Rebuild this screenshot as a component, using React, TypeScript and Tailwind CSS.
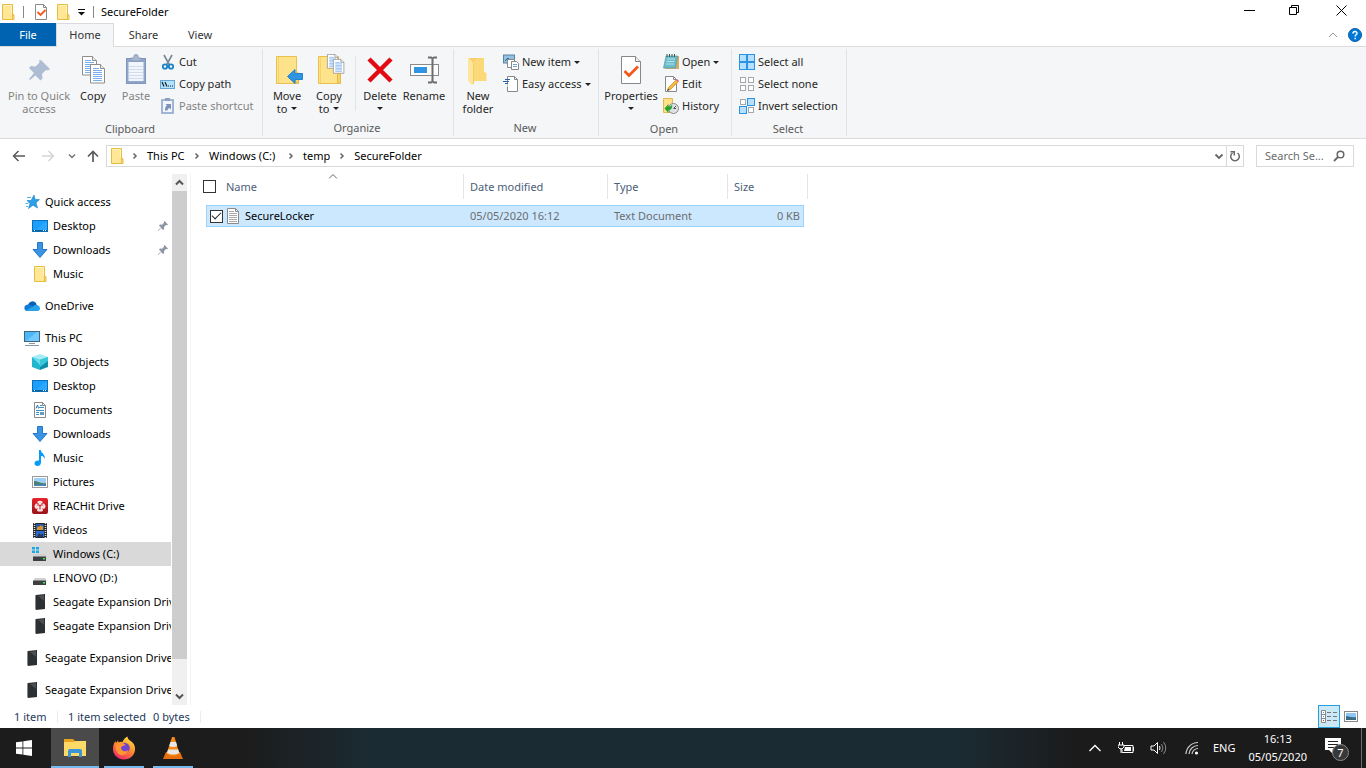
import React from 'react';

type P = { children?: React.ReactNode };
type IconProps = { w?: number; h?: number; children?: React.ReactNode; className?: string };

function Svg({ w = 16, h = 16, children, className = '' }: IconProps) {
  return (
    <svg width={w} height={h} viewBox={`0 0 ${w} ${h}`} fill="none" aria-hidden="true" className={`shrink-0 ${className}`}>
      {children}
    </svg>
  );
}

const Folder = () => (
  <Svg>
    <path d="M2.5.5h10v10.500h1.500v4.500h-11.500z" fill="#ffe796" stroke="#e6bd41" />
    <path d="M12.500 10.500v5M12.500 10.500h1.500" stroke="#e6bd41" />
    <path d="M3.500 1.500h8v8" stroke="#fff3c4" />
  </Svg>
);
const CheckDoc = () => (
  <Svg>
    <path d="M2.500.500h8l3 3v12h-11z" fill="#fff" stroke="#8a8a8a" />
    <path d="M10.500.500v3h3" stroke="#8a8a8a" />
    <path d="M4.500 8l3 3 5-5" stroke="#f4591c" strokeWidth="1.800" />
  </Svg>
);
const Caret = ({ className = '' }: { className?: string }) => (
  <Svg w={6} h={3} className={className}><path d="M0 0h6L3 3z" fill="#222" /></Svg>
);
const Chevron = () => (
  <Svg w={6} h={8}><path d="M1.500 1.500L4 4 1.500 6.500" stroke="#666" strokeWidth="1.500" /></Svg>
);

const PinBig = () => (
  <Svg w={32} h={32}>
    <path d="M17 6l9 9-2 1.500-2-.500-4 4 .500 4.500-2 2-5-5L6 26l-1-1 5-6-5-5 2-2 4.500.500 4-4-.500-2z" fill="#afbdd4" transform="translate(1 0)" />
  </Svg>
);
const Sheet = ({ x, y }: { x: number; y: number }) => (
  <g transform={`translate(${x} ${y})`}>
    <path d="M.500.500h10l4 4v14.500H.500z" fill="#fff" stroke="#8d8d8d" />
    <path d="M10.500.500v4h4" fill="#eee" stroke="#8d8d8d" />
    <path d="M3 4.500h6M3 6.500h9M3 8.500h9M3 10.500h9M3 12.500h9M3 14.500h9M3 16.500h9" stroke="#78aef0" />
  </g>
);
const CopyBig = () => (
  <Svg w={32} h={32}><Sheet x={5} y={2} /><Sheet x={13} y={10} /></Svg>
);
const PasteBig = () => (
  <Svg w={32} h={32}>
    <rect x="6.500" y="4.500" width="19" height="25" fill="#8fa5cb" stroke="#8296bb" />
    <rect x="8.500" y="8" width="15" height="19" fill="#f1f5fc" />
    <path d="M9 12.500h14M9 15.500h14M9 18.500h14M9 21.500h14M9 24.500h14" stroke="#d2dcec" />
    <path d="M11 7V4h3V2.500a2 2 0 014 0V4h3v3z" fill="#a8b7d0" stroke="#8d9cb7" />
  </Svg>
);
const Scissors = () => (
  <Svg>
    <path d="M4 1l5.500 10M12 1L6.500 11" stroke="#7a8794" strokeWidth="1.600" />
    <circle cx="5" cy="12.500" r="2.200" stroke="#1782c5" strokeWidth="1.800" />
    <circle cx="11" cy="12.500" r="2.200" stroke="#1782c5" strokeWidth="1.800" />
  </Svg>
);
const PathIcon = () => (
  <Svg>
    <rect x=".500" y="4.500" width="14" height="8" fill="#b5e2fb" stroke="#64a5d4" />
    <path d="M2 6l2 4.500M5 6l2 4.500" stroke="#123" strokeWidth="1.200" />
    <path d="M8 10h1M10 10h1M12 10h1" stroke="#123" strokeWidth="1.200" />
  </Svg>
);
const PasteShortcut = () => (
  <Svg>
    <rect x="2" y="2" width="11" height="13" fill="#f2f5fa" stroke="#8fa5cb" strokeWidth="1.600" />
    <rect x="5" y="0" width="5" height="3" fill="#8fa0bd" />
    <path d="M5 12.500c0-3 .500-4 2-5L5.500 6H11v5.500L9.500 10c-1.500.500-2 1.500-2 2.500z" fill="#7b92bc" />
  </Svg>
);
const BigFolder = () => (
  <>
    <path d="M5.500 2.500h20v21h2v6h-22z" fill="#ffe38b" stroke="#eac04c" />
    <path d="M7.500 3v26" stroke="#f5d470" />
    <path d="M24.500 29v-10q2-2 3 0v10z" fill="#fbd365" stroke="#e5b94a" />
  </>
);
const MoveTo = () => (
  <Svg w={32} h={32}>
    <BigFolder />
    <path d="M16.500 22.500l7.500-7v4h7.500v6h-7.500v4z" fill="#2f94e2" stroke="#2384d0" />
  </Svg>
);
const CopyTo = () => (
  <Svg w={32} h={32}>
    <BigFolder />
    <g transform="translate(14 0) scale(.750)"><Sheet x={0} y={0} /></g>
    <g transform="translate(20 5) scale(.750)"><Sheet x={0} y={0} /></g>
  </Svg>
);
const DeleteIcon = () => (
  <Svg w={32} h={32}><path d="M5 5l22 22M27 5L5 27" stroke="#e30b13" strokeWidth="4.500" /></Svg>
);
const RenameIcon = () => (
  <Svg w={32} h={32}>
    <rect x="2.500" y="10.500" width="28" height="11" fill="#fff" stroke="#8a8a8a" />
    <rect x="6" y="13" width="13" height="6" fill="#2f94e2" />
    <path d="M20 3.500h3l1.500 1 1.500-1h3M20 28.500h3l1.500-1 1.500 1h3M24.500 4v24" stroke="#6d6d6d" strokeWidth="2" />
  </Svg>
);
const NewFolder = () => (
  <Svg w={32} h={32}>
    <path d="M12 4h10v14l2.500 1v8H12z" fill="#fbd878" />
    <path d="M6 4h4l2 4v22l-2 1-4-4z" fill="#ffe59b" />
    <path d="M7 4h15l-8 1-2 3z" fill="#f5cf6c" />
    <path d="M11.500 30V9l-3-5" stroke="#f2cc69" />
  </Svg>
);
const NewItem = () => (
  <Svg>
    <rect x=".500" y="1" width="11" height="8" fill="#92c1e1" stroke="#5a84a2" />
    <path d="M2 7l3-3 3 3" stroke="#28638a" />
    <path d="M4.500 5.500h7v8h-7z" fill="#fff" stroke="#888" />
    <path d="M8.500 7.500h5l2 2v6h-7z" fill="#fff" stroke="#888" />
    <path d="M10 10.500h4M10 12.500h4" stroke="#6fa1d5" />
  </Svg>
);
const EasyAccess = () => (
  <Svg>
    <path d="M4.500.500h7l3 3v12h-10z" fill="#fff" stroke="#888" />
    <path d="M11.500.500v3h3" stroke="#888" />
    <path d="M2 3.500h5M0 5.500h6M2 7.500h3" stroke="#2363a6" />
    <path d="M4 8v3" stroke="#fff" />
  </Svg>
);
const PropertiesIcon = () => (
  <Svg w={32} h={32}>
    <path d="M6.500 2.500h14l5 5v22h-19z" fill="#fff" stroke="#888" />
    <path d="M20.500 2.500v5h5" fill="#eee" stroke="#888" />
    <path d="M9.500 17l4.500 4.500 9-9" stroke="#f4591c" strokeWidth="2.800" />
  </Svg>
);
const Notepad = () => (
  <Svg>
    <path d="M4 2h12v13H2z" fill="#d5ad62" />
    <path d="M3 2h11.500l-2 12H.500z" fill="#6bbccc" stroke="#4b92a3" strokeWidth=".600" />
    <path d="M4 5h8M3.500 7.500h8M3 10h8" stroke="#b4e2e8" />
    <path d="M4 0v3M6.500 0v3M9 0v3M11.500 0v3" stroke="#455" />
  </Svg>
);
const EditIcon = () => (
  <Svg>
    <path d="M2.500.500h8l3 3v12h-11z" fill="#fff" stroke="#888" />
    <path d="M10.500.500v3h3" stroke="#888" />
    <path d="M4.500 14.500l1-3 8-8 2 2-8 8z" fill="#f5b83d" stroke="#c78b2a" strokeWidth=".700" />
    <path d="M4 15l1-2.500 1.500 1.500z" fill="#444" />
    <path d="M13 4l2 2 1-1-2-2z" fill="#e0607a" />
  </Svg>
);
const HistoryIcon = () => (
  <Svg>
    <path d="M.500.500h9v14h-9z" fill="#ffe18a" stroke="#dfb852" />
    <circle cx="10.500" cy="10.500" r="5" fill="#dfe2e4" stroke="#858b90" />
    <path d="M10.500 10.500l2.500-2.500M10.500 10.500H13" stroke="#555" />
    <path d="M1.500 10.500l4-4.500v2.500c2 0 3-.500 3.500-2 1 3-1 5.500-3.500 6V15z" fill="#25a52c" />
  </Svg>
);
const Box = ({ x, y, on, s = 5 }: { x: number; y: number; on?: boolean; s?: number }) => (
  <rect x={x + 0.5} y={y + 0.5} width={s} height={s} fill={on ? '#b5e0ff' : '#fff'} stroke={on ? '#2c92e2' : '#a7a7a7'} />
);
const SelectAll = () => (
  <Svg><Box x={0} y={0} on s={7} /><Box x={8} y={0} on s={7} /><Box x={0} y={8} on s={7} /><Box x={8} y={8} on s={7} /></Svg>
);
const SelectNone = () => (
  <Svg><Box x={1} y={1} /><Box x={9} y={1} /><Box x={1} y={9} /><Box x={9} y={9} /></Svg>
);
const Invert = () => (
  <Svg><Box x={1} y={1} /><Box x={8} y={0} on s={7} /><Box x={0} y={8} on s={7} /><Box x={9} y={9} /></Svg>
);

/* Navigation pane icons */
const Star = () => (
  <Svg>
    <path d="M10 1l1.200 4.600H15.500L12 8.800l1.500 5.200L9 11.200 4.500 14.500 6 9.500 3 6.500h4z" fill="#2b9fe8" stroke="#1882cb" strokeWidth=".600" />
    <path d="M3 3.500h4M1.500 9.500h3M2 12.500h2" stroke="#58b6ee" />
  </Svg>
);
const Desktop = () => (
  <Svg>
    <rect x=".500" y="2.500" width="15" height="11" fill="#1b9fff" stroke="#0d71b9" />
    <path d="M3 13l10-9h2v9z" fill="#48b4ff" opacity=".400" />
    <path d="M1 12.500h14" stroke="#0b5c97" /><path d="M2 12.500h1M11 12.500h1M13 12.500h1" stroke="#fff" />
  </Svg>
);
const Down = () => (
  <Svg><path d="M5.500.500h5v7h4.500L8 15.500 1 7.500h4.500z" fill="#3994e4" stroke="#2877c7" /></Svg>
);
const Cloud = () => (
  <Svg>
    <path d="M4 7a4.600 4.600 0 018-2l1 3-4 2z" fill="#0a62b5" />
    <path d="M2.500 13A3.300 3.300 0 012 7c2-1.200 4.500-.500 7 1.700L6 13z" fill="#0f7dd8" />
    <path d="M9 8.500c3-3 7-.800 7 2 0 1.500-1 2.500-2.500 2.500H2.500c1.500-2.500 4-3 6.500-4.500z" fill="#27a4ea" />
  </Svg>
);
const Pc = () => (
  <Svg>
    <rect x=".500" y="1.500" width="15" height="10" fill="#4db7fa" stroke="#3d6682" />
    <path d="M2 11L13 2h2v9z" fill="#9cdcff" opacity=".500" />
    <path d="M5 13.500h6M1 15.500h14" stroke="#8797a3" />
  </Svg>
);
const Cube = () => (
  <Svg>
    <path d="M0 3l8 2v11l-8-3z" fill="#20b6cf" /><path d="M16 3L8 5v11l8-3z" fill="#108da8" />
    <path d="M0 3l8-3 8 3-8 3z" fill="#a4edf4" /><path d="M8 6l8-3v4l-8 6z" fill="#37c8dc" />
    <path d="M0 3l8 3v5z" fill="#68dbe8" />
  </Svg>
);
const DocIcon = () => (
  <Svg>
    <path d="M2.500.500h8l3 3v12h-11z" fill="#fff" stroke="#888" /><path d="M10.500.500v3h3" stroke="#888" />
    <path d="M7 5.500h5M8 3.500h2M4 8.500h8M4 10.500h3M4 12.500h3" stroke="#3a91d1" />
    <path d="M8 10h4v3H8z" fill="#659bb8" /><path d="M4 6.500l1.500-3.500 1 3.500" stroke="#2577b5" />
  </Svg>
);
const Note = () => (
  <Svg><path d="M7 0h1.800c.300 3.500 4.700 4 4 9-1-2.500-2.300-3-3.800-3v6.500C9 15 7.200 16 5.500 16 3.600 16 2.500 15 2.500 13.500c0-2 2-3.300 4.500-2.800z" fill="#079bf4" /></Svg>
);
const Picture = () => (
  <Svg>
    <rect x=".500" y="2.500" width="15" height="11" fill="#fff" stroke="#999" />
    <rect x="2" y="4" width="12" height="8" fill="#9dd0f8" />
    <path d="M2 7c4 0 6 3 12 2v3H2z" fill="#4d7f70" /><path d="M2 10.500h12v1.500H2z" fill="#4a86bd" />
  </Svg>
);
const Reachit = () => (
  <Svg>
    <defs><linearGradient id="reach" x1="0" y1="0" x2="0" y2="1"><stop stopColor="#e8232b" /><stop offset="1" stopColor="#99141b" /></linearGradient></defs>
    <rect width="16" height="16" rx="2" fill="url(#reach)" />
    <path d="M5 4q3-2.500 6 0l-2 2 3-.500q3 3 0 5.500l-2-1q2 2 0 3.500H6q-2-1.500 0-3.500l-2 1q-3-2.500 0-5.500l3 .500z" fill="#f7e3e3" />
    <path d="M5 7q3-1 3 1.500M11 7q-3-1-3 1.500v3" stroke="#c81f25" />
  </Svg>
);
const Film = () => (
  <Svg>
    <rect x="1" y="1" width="14" height="15" fill="#24272c" />
    <path d="M2.500 1v15M13.500 1v15" stroke="#dedede" strokeWidth="1.500" strokeDasharray="1 1" />
    <rect x="4" y="2" width="8" height="6" fill="#2e55a0" /><rect x="4" y="9" width="8" height="6" fill="#2b68cf" />
    <path d="M5 6c1-3 2 0 3-2s2 1 3 0v4H5z" fill="#d5962e" /><path d="M5 15l2-4 2 2 2-2v4z" fill="#253753" />
  </Svg>
);
const Drive = ({ win = false }: { win?: boolean }) => (
  <Svg>
    {win && <path d="M0 1h3v2.500H0zM4 1h3v2.500H4zM0 4.500h3V7H0zM4 4.500h3V7H4z" fill="#18a9e8" />}
    <path d="M3 8h10l2 3H1z" fill="#d0d0d0" />
    <rect x="1" y="10.500" width="13" height="4.500" rx=".500" fill="#3c4043" />
    <rect x="11" y="12" width="2" height="1.500" fill="#37e94a" />
  </Svg>
);
const Seagate = () => (
  <Svg><path d="M4 1l9-1v15l-9 1z" fill="#2d3032" /><path d="M4 1l-1 .500V15l1 1z" fill="#888" /><path d="M6 2l6-1v6z" fill="#4b4f52" /></Svg>
);
const Pin = () => (
  <Svg w={12} h={12}><path d="M7.500 1l3.500 3.500-1 .800-1-.200-2 2 .200 2-1.200 1-2-2L1.500 11l-.500-.500 3-3-2-2 1-1 2 .200 2-2-.300-1z" fill="#8b97a3" /></Svg>
);
const TextFile = () => (
  <Svg w={14}>
    <path d="M1.500.500h8l3 3v12h-11z" fill="#fff" stroke="#8a8a8a" /><path d="M9.500.500v3h3" stroke="#8a8a8a" />
    <path d="M3 3.500h5M3 5.500h8M3 7.500h8M3 9.500h8M3 11.500h8M3 13.500h8" stroke="#aaa" />
  </Svg>
);

function Big({ icon, label, width, menu, off }: { icon: React.ReactNode; label: string[]; width: string; menu?: boolean; off?: boolean }) {
  return (
    <button type="button" className={`flex shrink-0 flex-col items-center pt-[3px] leading-[13px] whitespace-nowrap ${width} ${off ? 'text-[#838383]' : ''}`}>
      {icon}
      <span className="mt-[3px]">{label[0]}</span>
      {(label[1] || menu) && (
        <span className="flex h-[13px] items-center gap-1">{label[1]}{menu && <Caret />}</span>
      )}
    </button>
  );
}
function Small({ icon, label, menu, off }: { icon: React.ReactNode; label: string; menu?: boolean; off?: boolean }) {
  return (
    <button type="button" className={`flex h-[22px] items-center whitespace-nowrap ${off ? 'text-[#838383]' : ''}`}>
      {icon}
      <span className="ml-[3px]">{label}</span>
      {menu && <Caret className="ml-[3px]" />}
    </button>
  );
}
function Group({ name, width, children }: P & { name: string; width: string }) {
  return (
    <section aria-label={name} className={`my-[2px] flex shrink-0 flex-col border-r border-[#e2e3e4] pt-[2px] ${width}`}>
      <div className="flex h-[66px] pl-1">{children}</div>
      <div className="pt-1 pr-[2px] text-center leading-4 text-[#5a5a5a]">{name}</div>
    </section>
  );
}

type Node = { t: string; i: React.ReactNode; top?: boolean; gap?: boolean; pin?: boolean; sel?: boolean };
const nodes: Node[] = [
  { t: 'Quick access', i: <Star />, top: true },
  { t: 'Desktop', i: <Desktop />, pin: true },
  { t: 'Downloads', i: <Down />, pin: true },
  { t: 'Music', i: <Folder /> },
  { t: 'OneDrive', i: <Cloud />, top: true, gap: true },
  { t: 'This PC', i: <Pc />, top: true, gap: true },
  { t: '3D Objects', i: <Cube /> },
  { t: 'Desktop', i: <Desktop /> },
  { t: 'Documents', i: <DocIcon /> },
  { t: 'Downloads', i: <Down /> },
  { t: 'Music', i: <Note /> },
  { t: 'Pictures', i: <Picture /> },
  { t: 'REACHit Drive', i: <Reachit /> },
  { t: 'Videos', i: <Film /> },
  { t: 'Windows (C:)', i: <Drive win />, sel: true },
  { t: 'LENOVO (D:)', i: <Drive /> },
  { t: 'Seagate Expansion Drive', i: <Seagate /> },
  { t: 'Seagate Expansion Drive', i: <Seagate /> },
  { t: 'Seagate Expansion Drive', i: <Seagate />, top: true, gap: true },
  { t: 'Seagate Expansion Drive', i: <Seagate />, top: true, gap: true },
];

function TitleBar() {
  return (
    <header className="flex h-[23px] shrink-0 items-center">
      <div className="flex items-center">
        <Folder />
        <span className="ml-[7px] h-3 w-px bg-[#888]" />
        <button type="button" aria-label="Properties" className="ml-[9px]"><CheckDoc /></button>
        <button type="button" aria-label="New folder" className="ml-[6px]"><Folder /></button>
        <button type="button" aria-label="Customize toolbar" className="ml-[7px]">
          <Svg w={8} h={8}><path d="M0 1.500h7" stroke="#111" /><path d="M0 4h7L3.500 7.500z" fill="#111" /></Svg>
        </button>
        <span className="ml-[7px] h-3 w-px bg-[#888]" />
      </div>
      <h1 className="ml-[7px]">SecureFolder</h1>
      <div className="ml-auto flex pb-[3px]">
        <button type="button" aria-label="Minimize" className="flex w-[45px] justify-center"><Svg w={11} h={11}><path d="M0 5.500h11" stroke="#000" /></Svg></button>
        <button type="button" aria-label="Restore" className="flex w-[45px] justify-center"><Svg w={11} h={11}><path d="M.500 2.500h7v7h-7zM2.500 2.500v-2h7v7h-2" stroke="#000" /></Svg></button>
        <button type="button" aria-label="Close" className="flex w-[49px] justify-center"><Svg w={11} h={11}><path d="M.500.500l10 10M10.500.500l-10 10" stroke="#000" /></Svg></button>
      </div>
    </header>
  );
}

function Ribbon() {
  return (
    <>
      <nav className="relative z-10 -mb-px flex h-[24px] shrink-0 items-stretch text-[#333]">
        <button type="button" className="mb-px w-[56px] bg-[#0063b1] text-white">File</button>
        <button type="button" className="w-[58px] border-x border-t border-[#dadbdc] bg-[#f5f6f7] pb-[2px]">Home</button>
        <button type="button" className="w-[59px]">Share</button>
        <button type="button" className="w-[54px]">View</button>
        <div className="ml-auto flex items-center gap-[10px] pr-1">
          <button type="button" aria-label="Collapse ribbon"><Svg w={10} h={6}><path d="M1 5l4-4 4 4" stroke="#999" /></Svg></button>
          <button type="button" aria-label="Help">
            <Svg w={14} h={14}><circle cx="7" cy="7" r="6.500" fill="#0078d7" stroke="#0a5ea8" /><path d="M5 5.500C5 3 9 3 9 5.300 9 6.800 7.200 6.700 7.200 8.500M7.200 9.800v1.500" stroke="#fff" strokeWidth="1.500" /></Svg>
          </button>
        </div>
      </nav>
      <div className="flex h-[93px] shrink-0 border-y border-[#dadbdc] bg-[#f5f6f7] text-[#262626]">
        <Group name="Clipboard" width="w-[263px]">
          <Big icon={<PinBig />} label={['Pin to Quick', 'access']} width="w-[70px]" off />
          <Big icon={<CopyBig />} label={['Copy']} width="w-[38px]" />
          <Big icon={<PasteBig />} label={['Paste']} width="w-[48px]" off />
          <div>
            <Small icon={<Scissors />} label="Cut" />
            <Small icon={<PathIcon />} label="Copy path" />
            <Small icon={<PasteShortcut />} label="Paste shortcut" off />
          </div>
        </Group>
        <Group name="Organize" width="w-[191px]">
          <Big icon={<MoveTo />} label={['Move', 'to']} width="w-[40px]" menu />
          <Big icon={<CopyTo />} label={['Copy', 'to']} width="w-[44px]" menu />
          <span className="mx-1 my-[5px] w-px shrink-0 bg-[#e2e3e4]" />
          <Big icon={<DeleteIcon />} label={['Delete']} width="w-[40px]" menu />
          <Big icon={<RenameIcon />} label={['Rename']} width="w-[48px]" />
        </Group>
        <Group name="New" width="w-[145px]">
          <Big icon={<NewFolder />} label={['New', 'folder']} width="w-[40px]" />
          <div className="pl-[5px]">
            <Small icon={<NewItem />} label="New item" menu />
            <Small icon={<EasyAccess />} label="Easy access" menu />
          </div>
        </Group>
        <Group name="Open" width="w-[133px]">
          <Big icon={<PropertiesIcon />} label={['Properties']} width="w-[56px]" menu />
          <div className="pl-[4px]">
            <Small icon={<Notepad />} label="Open" menu />
            <Small icon={<EditIcon />} label="Edit" />
            <Small icon={<HistoryIcon />} label="History" />
          </div>
        </Group>
        <Group name="Select" width="w-[115px]">
          <div className="pl-[3px]">
            <Small icon={<SelectAll />} label="Select all" />
            <Small icon={<SelectNone />} label="Select none" />
            <Small icon={<Invert />} label="Invert selection" />
          </div>
        </Group>
      </div>
    </>
  );
}

function AddressBar() {
  return (
    <div className="flex h-[35px] shrink-0 items-center px-3 pb-[2px]">
      <button type="button" aria-label="Back" className="w-[29px]"><Svg w={14} h={12}><path d="M13 6H2M6.500 1L1.500 6l5 5" stroke="#5a5a5a" strokeWidth="1.500" /></Svg></button>
      <button type="button" aria-label="Forward" className="w-[27px]"><Svg w={14} h={12}><path d="M1 6h11M7.500 1l5 5-5 5" stroke="#d5d5d5" strokeWidth="1.500" /></Svg></button>
      <button type="button" aria-label="Recent locations" className="w-[19px]"><Svg w={8} h={6}><path d="M1 1.500l3 3 3-3" stroke="#777" strokeWidth="1.500" /></Svg></button>
      <button type="button" aria-label="Up" className="w-[19px]"><Svg w={12} h={12}><path d="M6 12V2M1 6.500l5-5 5 5" stroke="#5a5a5a" strokeWidth="1.700" /></Svg></button>
      <div className="flex h-[22px] flex-1 items-center border border-[#d9d9d9] pl-[2px]">
        <Folder />
        <div className="ml-[7px] flex items-center gap-[9px]">
          <Chevron /><a href="#pc" className="w-[38px] whitespace-nowrap">This PC</a>
          <Chevron /><a href="#c" className="w-[70px] whitespace-nowrap">Windows (C:)</a>
          <Chevron /><a href="#temp">temp</a>
          <Chevron /><a href="#folder">SecureFolder</a>
        </div>
        <button type="button" aria-label="Previous locations" className="mr-[2px] ml-auto"><Svg w={10} h={8}><path d="M1.500 2.500L5 6l3.500-3.500" stroke="#666" strokeWidth="1.800" /></Svg></button>
        <button type="button" aria-label="Refresh" className="flex h-full w-[17px] items-center justify-center border-l border-[#d9d9d9]">
          <Svg w={12} h={12}><path d="M8.500 3A4.300 4.300 0 113.500 3M1.500 1.700H5.300V5.500" stroke="#666" strokeWidth="1.500" /></Svg>
        </button>
      </div>
      <label className="ml-3 flex h-[22px] w-[98px] items-center border border-[#d9d9d9] px-2">
        <input type="text" aria-label="Search SecureFolder" placeholder="Search Se..." className="min-w-0 flex-1 outline-none placeholder:text-[#6d6d6d]" />
        <Svg w={12} h={12}><circle cx="7.500" cy="4.500" r="3.300" stroke="#666" strokeWidth="1.500" /><path d="M5 7l-4 4" stroke="#666" strokeWidth="1.800" /></Svg>
      </label>
    </div>
  );
}

function NavPane() {
  return (
    <aside className="flex w-[191px] shrink-0 border-r border-[#f3f3f3]">
      <ul className="w-[171px] overflow-hidden pt-4">
        {nodes.map((n, k) => (
          <li key={k} className={n.gap ? 'mt-2' : ''}>
            <a href="#node" className={`flex h-6 items-center gap-[5px] whitespace-nowrap ${n.top ? 'pl-6' : 'pl-8'} ${n.sel ? 'bg-[#d9d9d9]' : ''}`}>
              {n.i}<span>{n.t}</span>{n.pin && <span className="mr-[2px] ml-auto"><Pin /></span>}
            </a>
          </li>
        ))}
      </ul>
      <div className="ml-px flex w-[15px] flex-col bg-[#f0f0f0]">
        <div className="flex h-[17px] items-center justify-center"><Svg w={9} h={7}><path d="M1 5.500L4.500 2 8 5.500" stroke="#555" strokeWidth="2" /></Svg></div>
        <div className="flex-[468] bg-[#cdcdcd]" />
        <div className="flex-[29]" />
        <div className="flex h-[17px] items-center justify-center"><Svg w={9} h={7}><path d="M1 1.500L4.500 5 8 1.500" stroke="#555" strokeWidth="2" /></Svg></div>
      </div>
    </aside>
  );
}

const boxClass = "flex h-[13px] w-[13px] shrink-0 appearance-none items-center justify-center border border-[#333] bg-white checked:before:mb-[3px] checked:before:h-[5px] checked:before:w-[9px] checked:before:-rotate-45 checked:before:border-b checked:before:border-l checked:before:border-[#222] checked:before:content-['']";

function Files() {
  return (
    <main className="min-w-0 flex-1 pl-3">
      <table className="table-fixed border-separate border-spacing-0 text-left">
        <colgroup>
          <col className="w-[3px]" /><col className="w-[258px]" /><col className="w-[144px]" /><col className="w-[120px]" /><col className="w-[76px]" /><col className="w-[4px]" />
        </colgroup>
        <thead className="text-[#4c607a]">
          <tr>
            <th colSpan={2} className="p-0 pb-[6px] font-normal">
              <div className="relative flex h-[25px] items-center gap-[10px] border-r border-[#e5e5e5]">
                <input type="checkbox" aria-label="Select all items" className={boxClass} />Name
                <span className="absolute top-0 left-1/2 -translate-x-1/2"><Svg w={9} h={5}><path d="M.500 4.500l4-4 4 4" stroke="#666" /></Svg></span>
              </div>
            </th>
            <th className="p-0 pb-[6px] font-normal"><div className="flex h-[25px] items-center border-r border-[#e5e5e5] pl-[6px]">Date modified</div></th>
            <th className="p-0 pb-[6px] font-normal"><div className="flex h-[25px] items-center border-r border-[#e5e5e5] pl-[6px]">Type</div></th>
            <th colSpan={2} className="p-0 pb-[6px] font-normal"><div className="flex h-[25px] items-center border-r border-[#e5e5e5] pl-[6px]">Size</div></th>
          </tr>
        </thead>
        <tbody className="text-[#6d6d6d]">
          <tr>
            <td className="p-0" />
            <td className="border-y border-l border-[#99d1ff] bg-[#cce8ff] p-0">
              <label className="flex h-5 items-center gap-[3px] pl-[3px] text-black">
                <input type="checkbox" defaultChecked className={boxClass} /><TextFile /><span className="pl-[2px]">SecureLocker</span>
              </label>
            </td>
            <td className="border-y border-[#99d1ff] bg-[#cce8ff] p-0 pl-[6px]">05/05/2020 16:12</td>
            <td className="border-y border-[#99d1ff] bg-[#cce8ff] p-0 pl-[6px]">Text Document</td>
            <td className="border-y border-r border-[#99d1ff] bg-[#cce8ff] p-0 pr-[3px] text-right">0 KB</td>
            <td className="p-0" />
          </tr>
        </tbody>
      </table>
    </main>
  );
}

function StatusBar() {
  return (
    <footer className="flex h-[23px] shrink-0 items-center pl-[14px] text-[#1e395b]">
      <span className="w-[43px]">1 item</span>
      <span className="h-3 w-px bg-[#ececec]" />
      <span className="w-[95px] pl-[10px] whitespace-nowrap">1 item selected</span>
      <span className="w-[47px] whitespace-nowrap">0 bytes</span>
      <span className="h-3 w-px bg-[#ececec]" />
      <div className="ml-auto flex h-full items-center pr-2">
        <button type="button" aria-label="Details view" className="flex h-full w-[22px] items-center justify-center border border-[#26a0da] bg-[#cbe8f6]">
          <Svg>
            <path d="M.500 1.500h4v12h-4zM.500 5.500h4M.500 9.500h4" fill="#fff" stroke="#888" />
            <path d="M6 3.500h4M12 3.500h4M6 7.500h4M12 7.500h4M6 11.500h4M12 11.500h4" stroke="#777" />
            <path d="M2 3.500h1" stroke="#69b" /><path d="M2 7.500h1" stroke="#39f" /><path d="M2 11.500h1" stroke="#e22" />
          </Svg>
        </button>
        <button type="button" aria-label="Large icons view" className="ml-[4px]">
          <Svg w={14} h={12}><rect x=".500" y=".500" width="13" height="10" fill="#fff" stroke="#888" /><path d="M2 2h10v7H2z" fill="#8cc8f5" /><path d="M2 5c3 0 5 2 10 1v3H2z" fill="#3b6b83" /></Svg>
        </button>
      </div>
    </footer>
  );
}

function Taskbar() {
  return (
    <div className="flex h-10 shrink-0 items-stretch bg-[linear-gradient(90deg,#1c1c1c_18%,#1b2b33_27%,#1b2b33_70%,#1b1b1b_79%)] text-white">
      <button type="button" aria-label="Start" className="flex w-[48px] items-center justify-center">
        <Svg><path d="M0 2.300L6.500 1.400V7.600H0zM7.300 1.300L16 0v7.600H7.300zM0 8.400h6.500v6.200L0 13.700zM7.300 8.400H16V16l-8.700-1.300z" fill="#fff" /></Svg>
      </button>
      <button type="button" aria-label="File Explorer" className="ml-[3px] flex w-[48px] items-center justify-center border-b-2 border-[#76b9ed] bg-[#4a4a4a] pt-[2px]">
        <Svg w={22} h={20}><path d="M0 1h9l2 2h11v15H0z" fill="#e9a41d" /><path d="M0 4h10l1-1h11v15H0z" fill="#ffd968" /><path d="M4 19v-6q0-2 2-2h10q2 0 2 2v6h-3v-4H7v4z" fill="#3995d8" /></Svg>
      </button>
      <button type="button" aria-label="Firefox" className="ml-[5px] flex w-[40px] items-center justify-center border-b-2 border-[#76b9ed] pt-[2px]">
        <Svg w={24} h={24}>
          <defs>
            <linearGradient id="fox" x1=".800" y1=".100" x2=".300" y2="1"><stop stopColor="#ffd93b" /><stop offset=".450" stopColor="#ff8a2b" /><stop offset="1" stopColor="#f0256e" /></linearGradient>
          </defs>
          <path d="M15.500.500c0 3 3 4 5 6 2 2 2.800 4.500 2.500 7.500-.500 5.500-5 9.500-11 9.500C6 23.500 1 19 1 13c0-3.500 1-6 2.500-8L4 7l2-2.500.500 2q2-1 4-.500C11 4 13 1.500 15.500.500z" fill="url(#fox)" />
          <circle cx="12.500" cy="12" r="5.300" fill="#6f46d0" />
          <path d="M4 8c4-2 7-1.500 9.500 1-2 .500-3.500 1-4.500 2.500 0 3.500 4 5 7.500 2.500-1 4-4.500 6-8 5C4 17.500 3 12 4 8z" fill="#ff9430" />
        </Svg>
      </button>
      <button type="button" aria-label="VLC" className="ml-[9px] flex w-[40px] items-center justify-center border-b-2 border-[#76b9ed] pt-[2px]">
        <Svg w={20} h={24}>
          <path d="M3 16h14l3 7H0z" fill="#e96f0e" /><path d="M9 1h2.500l5 17q-6.500 4-13 0z" fill="#f58a1b" />
          <path d="M7.500 6h5.500l1.200 4q-4 2-8 0zM5 13.500h10.300l1 3.500q-6 3-12.300 0z" fill="#e8e8e8" />
        </Svg>
      </button>
      <div className="ml-auto flex items-center">
        <button type="button" aria-label="Show hidden icons" className="mr-[17px]"><Svg w={12} h={8}><path d="M.500 7L6 1.500 11.500 7" stroke="#fff" strokeWidth="1.300" /></Svg></button>
        <Svg w={17} h={12}><path d="M6 3.500h9v7H4v-3M15.500 5v4" stroke="#fff" /><path d="M7 5h6v4H6z" fill="#fff" /><path d="M1.500 0v3M4.500 0v3M0 3h6v2l-2 2H2L0 5zM3 6v5" stroke="#fff" /></Svg>
        <Svg w={17} h={14} className="ml-[15px]"><path d="M1 5h3l3.500-3.500v11L4 9H1z" stroke="#fff" /><path d="M9.500 5q1 2 0 4" stroke="#fff" /><path d="M11.500 3q3 4 0 8M13.500 1q4.500 6 0 12" stroke="#888" /></Svg>
        <Svg w={14} h={14} className="ml-[18px]"><path d="M1 13A12 12 0 0113 1.500M4 13a9 9 0 019-8.500M7 13a6 6 0 016-5.500" stroke="#ccc" strokeWidth="1.200" /><circle cx="11.500" cy="12" r="1.600" fill="#fff" /></Svg>
        <span className="ml-[14px]">ENG</span>
        <div className="ml-[13px] pb-px text-center leading-[18px]"><div>16:13</div><div>05/05/2020</div></div>
        <button type="button" aria-label="7 notifications" className="relative ml-[18px] h-7 w-6">
          <Svg w={16} h={18} className="absolute top-[3px] left-0"><path d="M0 1h16v12h-8v4l-4-4H0z" fill="#fff" /><path d="M3 4.500h10M3 7.500h10M3 10.500h6" stroke="#222" /></Svg>
          <span className="absolute top-[10px] left-[7px] flex h-[17px] w-[17px] items-center justify-center rounded-full border border-[#888] bg-[#383838]">7</span>
        </button>
        <span className="ml-[12px] h-10 w-px bg-[#6b6b6b]" />
        <span className="w-1" />
      </div>
    </div>
  );
}

export default function App() {
  return (
    <div className="flex h-screen flex-col overflow-hidden bg-white font-['Noto_Sans',sans-serif] text-[11px] leading-4 text-black">
      <TitleBar />
      <Ribbon />
      <AddressBar />
      <div className="flex min-h-0 flex-1"><NavPane /><Files /></div>
      <StatusBar />
      <Taskbar />
    </div>
  );
}
